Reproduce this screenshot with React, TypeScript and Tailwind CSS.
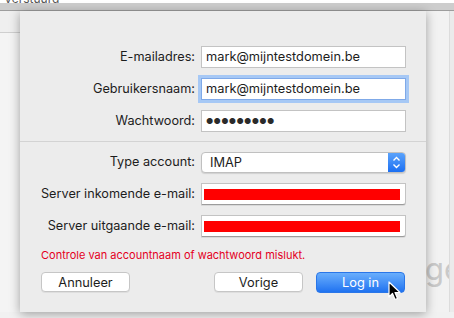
import React from "react";

const font = { fontFamily: "Inter, 'Liberation Sans', sans-serif" };

function Label({ children }: { children: React.ReactNode }) {
  return (
    <div className="w-[181px] shrink-0 pr-[6px] text-right text-[12.7px] text-[#1d1d1d] leading-none">
      {children}
    </div>
  );
}

function TextInput({ value, focused }: { value: string; focused?: boolean }) {
  return (
    <div
      className={
        "flex h-[22px] w-[205px] items-center border bg-white px-[4px] text-[12.8px] text-[#1d1d1d] " +
        (focused ? "border-[#7fa9e8] ring-[3px] ring-[#a6c8f5]" : "border-[#c3c3c3]")
      }
    >
      {value}
    </div>
  );
}

function RedInput() {
  return (
    <div className="flex h-[22px] w-[205px] items-center rounded-br-[3px] border border-[#c3c3c3] border-b-[#9c9c9c] bg-white pl-[2px] pr-[5px] shadow-[0_1px_0_rgba(0,0,0,0.08)]">
      <div className="h-[11px] w-full bg-[#ff0000]" />
    </div>
  );
}

function Cursor() {
  return (
    <svg width="14" height="20" viewBox="0 0 14 20" className="absolute left-[388px] top-[281px] z-20">
      <path d="M1 1 L1 16 L4.5 12.5 L7 18.5 L9.5 17.5 L7 11.5 L12 11.5 Z" fill="#000" stroke="#fff" strokeWidth="1.2" strokeLinejoin="round" />
    </svg>
  );
}

export default function App() {
  return (
    <div className="relative h-[318px] w-[454px] overflow-hidden bg-[#f1f1f1]" style={font}>
      {/* top window strip */}
      <div className="h-[3px] overflow-hidden bg-white">
        <div className="-mt-[10px] pl-[4px] text-[12px] text-[#555]">Verstuurd</div>
      </div>
      <div className="h-[8px] border-b border-[#9d9d9d] bg-[#cdcdcd]" />

      <div className="flex">
        {/* left strip */}
        <div className="w-[20px] shrink-0">
          <div className="h-[22px] border-b border-[#cfcfcf] bg-[#efefef]" />
          <div className="h-[279px] bg-[#f4f4f4]" />
        </div>

        {/* sheet */}
        <div className="relative z-10 flex h-[301px] w-[406px] shrink-0 flex-col bg-[#ececec] shadow-[0_2px_10px_rgba(0,0,0,0.35)]">
          <div className="flex flex-col gap-[10px] pt-[35px]">
            <div className="flex items-center">
              <Label>E-mailadres:</Label>
              <TextInput value="mark@mijntestdomein.be" />
            </div>
            <div className="flex items-center">
              <Label>Gebruikersnaam:</Label>
              <TextInput value="mark@mijntestdomein.be" focused />
            </div>
            <div className="flex items-center">
              <Label>Wachtwoord:</Label>
              <div className="flex h-[22px] w-[205px] items-center border border-[#c3c3c3] bg-white px-[4px] text-[8px] tracking-[0.3px] text-[#2a2a2a]">
                ●●●●●●●●●
              </div>
            </div>
          </div>

          <div className="mt-[9px] h-px bg-[#d3d3d3]" />

          <div className="flex flex-col gap-[10px] pt-[10px]">
            <div className="flex items-center">
              <Label>Type account:</Label>
              <div className="flex h-[21px] w-[205px] items-center overflow-hidden rounded-[4px] border border-[#c0c0c0] bg-white shadow-[0_1px_1px_rgba(0,0,0,0.12)]">
                <div className="flex-1 pl-[8px] text-[12.8px] text-[#1d1d1d]">IMAP</div>
                <div className="flex h-full w-[17px] items-center justify-center bg-gradient-to-b from-[#5aa2fb] to-[#1b6ff2]">
                  <svg width="9" height="13" viewBox="0 0 9 13">
                    <path d="M1.5 4.5 L4.5 1.5 L7.5 4.5 M1.5 8.5 L4.5 11.5 L7.5 8.5" fill="none" stroke="#fff" strokeWidth="1.4" />
                  </svg>
                </div>
              </div>
            </div>
            <div className="flex items-center">
              <Label>Server inkomende e-mail:</Label>
              <RedInput />
            </div>
            <div className="flex items-center">
              <Label>Server uitgaande e-mail:</Label>
              <RedInput />
            </div>
          </div>

          <div className="mt-[10px] pl-[21px] text-[11px] text-[#e4001e]">
            Controle van accountnaam of wachtwoord mislukt.
          </div>

          <div className="mt-[8px] flex items-center px-[21px]">
            <button className="h-[20px] w-[89px] rounded-[4px] border border-[#c6c6c6] bg-white text-[12.8px] text-[#1d1d1d] shadow-[0_1px_0_rgba(0,0,0,0.06)]">
              Annuleer
            </button>
            <div className="flex-1" />
            <button className="h-[20px] w-[89px] rounded-[4px] border border-[#c6c6c6] bg-white text-[12.8px] text-[#1d1d1d] shadow-[0_1px_0_rgba(0,0,0,0.06)]">
              Vorige
            </button>
            <button className="ml-[13px] h-[21px] w-[89px] rounded-[4px] border border-[#2a76e8] bg-gradient-to-b from-[#69aefc] to-[#1f72f0] text-[12.8px] text-white">
              Log in
            </button>
          </div>
        </div>

        {/* right strip */}
        <div className="flex flex-1 overflow-hidden">
          <div className="w-[23px] shrink-0 bg-[#f2f2f2] pt-[242px]">
            <div className="-ml-[1px] text-[31px] leading-none text-[#c9c9c9]">ge</div>
          </div>
          <div className="flex-1 border-l border-[#dcdcdc] bg-[#ebebeb]" />
        </div>
      </div>

      <Cursor />
    </div>
  );
}
